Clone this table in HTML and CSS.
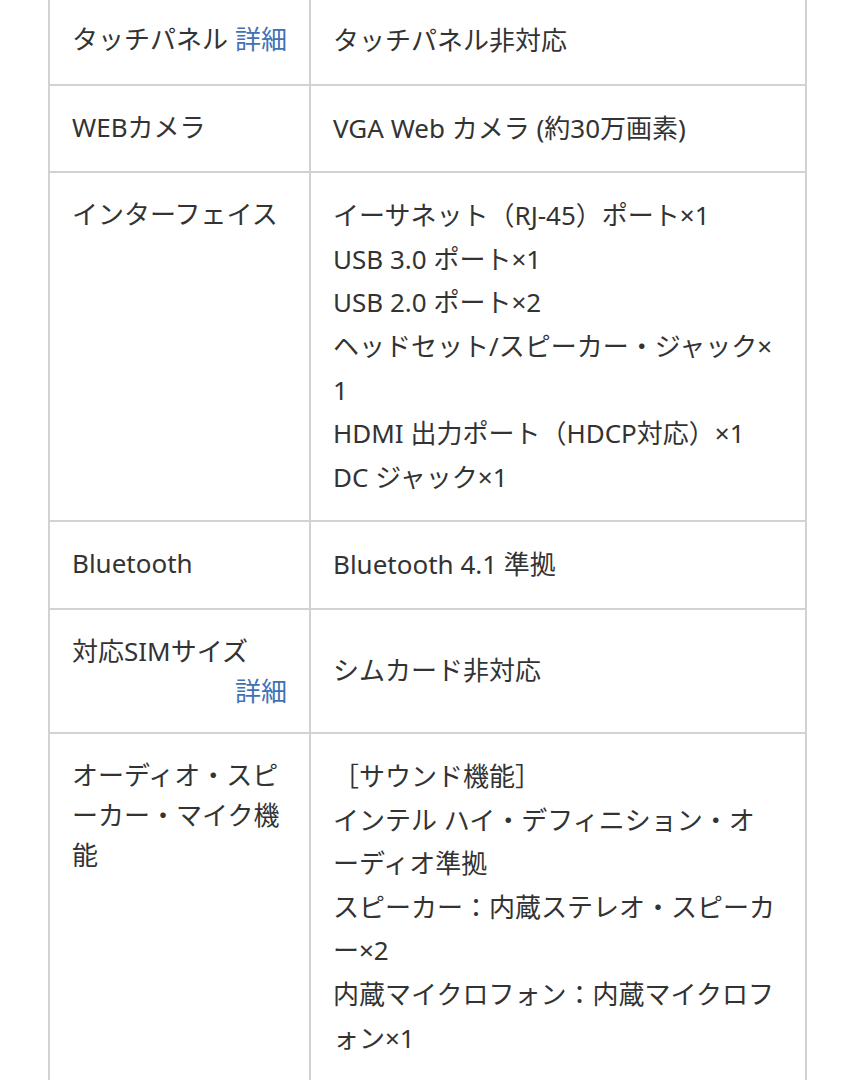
FILE: index.html
```html
<!DOCTYPE html>
<html lang="ja">
<head>
<meta charset="utf-8">
<link rel="stylesheet" href="styles.css">
</head>
<body>
<table class="spec">
  <colgroup><col class="c-head"><col class="c-body"></colgroup>
  <tr>
    <th>タッチパネル <a class="detail" href="#">詳細</a></th>
    <td>タッチパネル非対応</td>
  </tr>
  <tr>
    <th>WEBカメラ</th>
    <td>VGA Web カメラ (約30万画素)</td>
  </tr>
  <tr>
    <th>インターフェイス</th>
    <td>イーサネット（RJ-45）ポート×1<br>USB 3.0 ポート×1<br>USB 2.0 ポート×2<br>ヘッドセット/スピーカー・ジャック×1<br>HDMI 出力ポート（HDCP対応）×1<br>DC ジャック×1</td>
  </tr>
  <tr>
    <th>Bluetooth</th>
    <td>Bluetooth 4.1 準拠</td>
  </tr>
  <tr>
    <th>対応SIMサイズ <a class="detail" href="#">詳細</a></th>
    <td>シムカード非対応</td>
  </tr>
  <tr>
    <th>オーディオ・スピーカー・マイク機能</th>
    <td>［サウンド機能］<br>インテル ハイ・デフィニション・オーディオ準拠<br>スピーカー：内蔵ステレオ・スピーカー×2<br>内蔵マイクロフォン：内蔵マイクロフォン×1</td>
  </tr>
</table>
</body>
</html>
```
FILE: styles.css
```css
html, body {
  margin: 0;
  padding: 0;
  background: #fff;
}
body {
  font-family: "Noto Sans", "Noto Sans CJK JP", sans-serif;
  color: #333;
  font-size: 26px;
}
.spec {
  border-collapse: collapse;
  table-layout: fixed;
  width: 757px;
  margin: -4px 0 0 48px;
}
.c-head { width: 261px; }
.c-body { width: 496px; }
.spec th, .spec td {
  border: 2px solid #d2d2d2;
  padding: 21px 22px;
  text-align: left;
  font-weight: normal;
}
.spec th {
  vertical-align: top;
  line-height: 40px;
}
.spec td {
  vertical-align: middle;
  line-height: 43.6px;
  padding-right: 27px;
  word-break: break-all;
}
.detail {
  float: right;
  color: #3f72b5;
  text-decoration: none;
}
```
